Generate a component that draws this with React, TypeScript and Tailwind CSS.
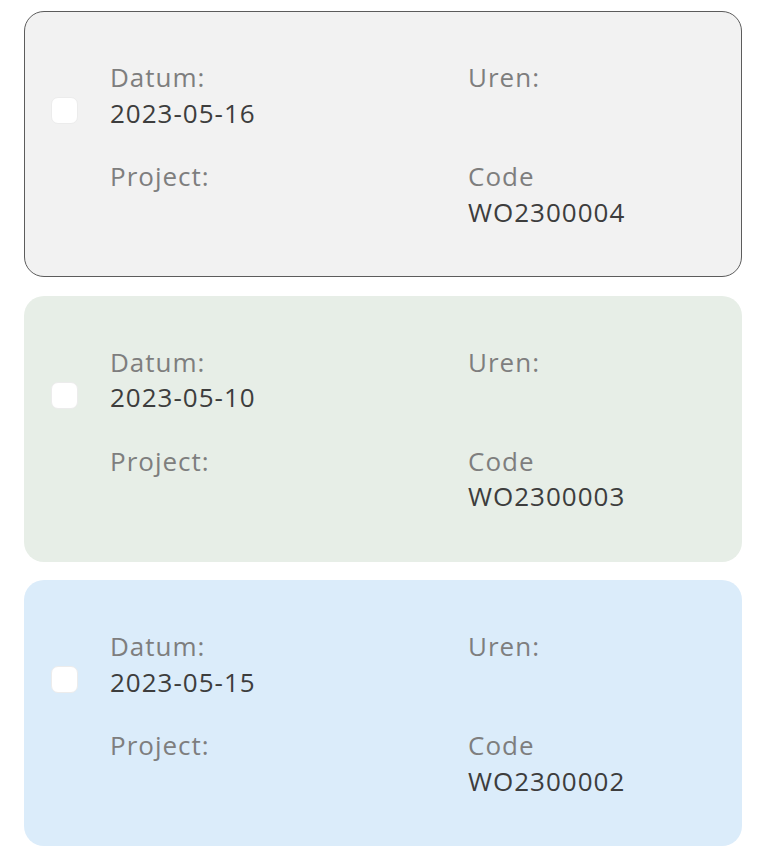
import React from "react";

type Item = { date: string; code: string; bg: string };

const items: Item[] = [
  { date: "2023-05-16", code: "WO2300004", bg: "bg-[#f2f2f2] border border-[#5c5c5c]" },
  { date: "2023-05-10", code: "WO2300003", bg: "bg-[#e7eee7] border border-transparent" },
  { date: "2023-05-15", code: "WO2300002", bg: "bg-[#dbecfa] border border-transparent" },
];

function Card({ item }: { item: Item }) {
  return (
    <div className={`flex items-start h-[266px] rounded-[20px] pl-[26px] pt-[48px] ${item.bg}`}>
      <div className="mt-[37px] w-[27px] h-[27px] rounded-[7px] bg-white border border-[#ececec] shrink-0" />
      <div className="ml-[32px] grid grid-cols-[358px_1fr] gap-y-[28px] text-[26px] leading-[35.5px] tracking-[1px]">
        <div>
          <div className="text-[#7e7e7e]">Datum:</div>
          <div className="text-[#3d3d3d]">{item.date}</div>
        </div>
        <div>
          <div className="text-[#7e7e7e]">Uren:</div>
          <div className="text-[#3d3d3d]">&nbsp;</div>
        </div>
        <div>
          <div className="text-[#7e7e7e]">Project:</div>
          <div className="text-[#3d3d3d]">&nbsp;</div>
        </div>
        <div>
          <div className="text-[#7e7e7e]">Code</div>
          <div className="text-[#3d3d3d]">{item.code}</div>
        </div>
      </div>
    </div>
  );
}

export default function App() {
  return (
    <div
      className="min-h-[858px] bg-white px-[24px] pt-[11px] flex flex-col gap-[18.5px]"
      style={{ fontFamily: '"Open Sans", "Noto Sans", sans-serif' }}
    >
      {items.map((it) => (
        <Card key={it.code} item={it} />
      ))}
    </div>
  );
}
